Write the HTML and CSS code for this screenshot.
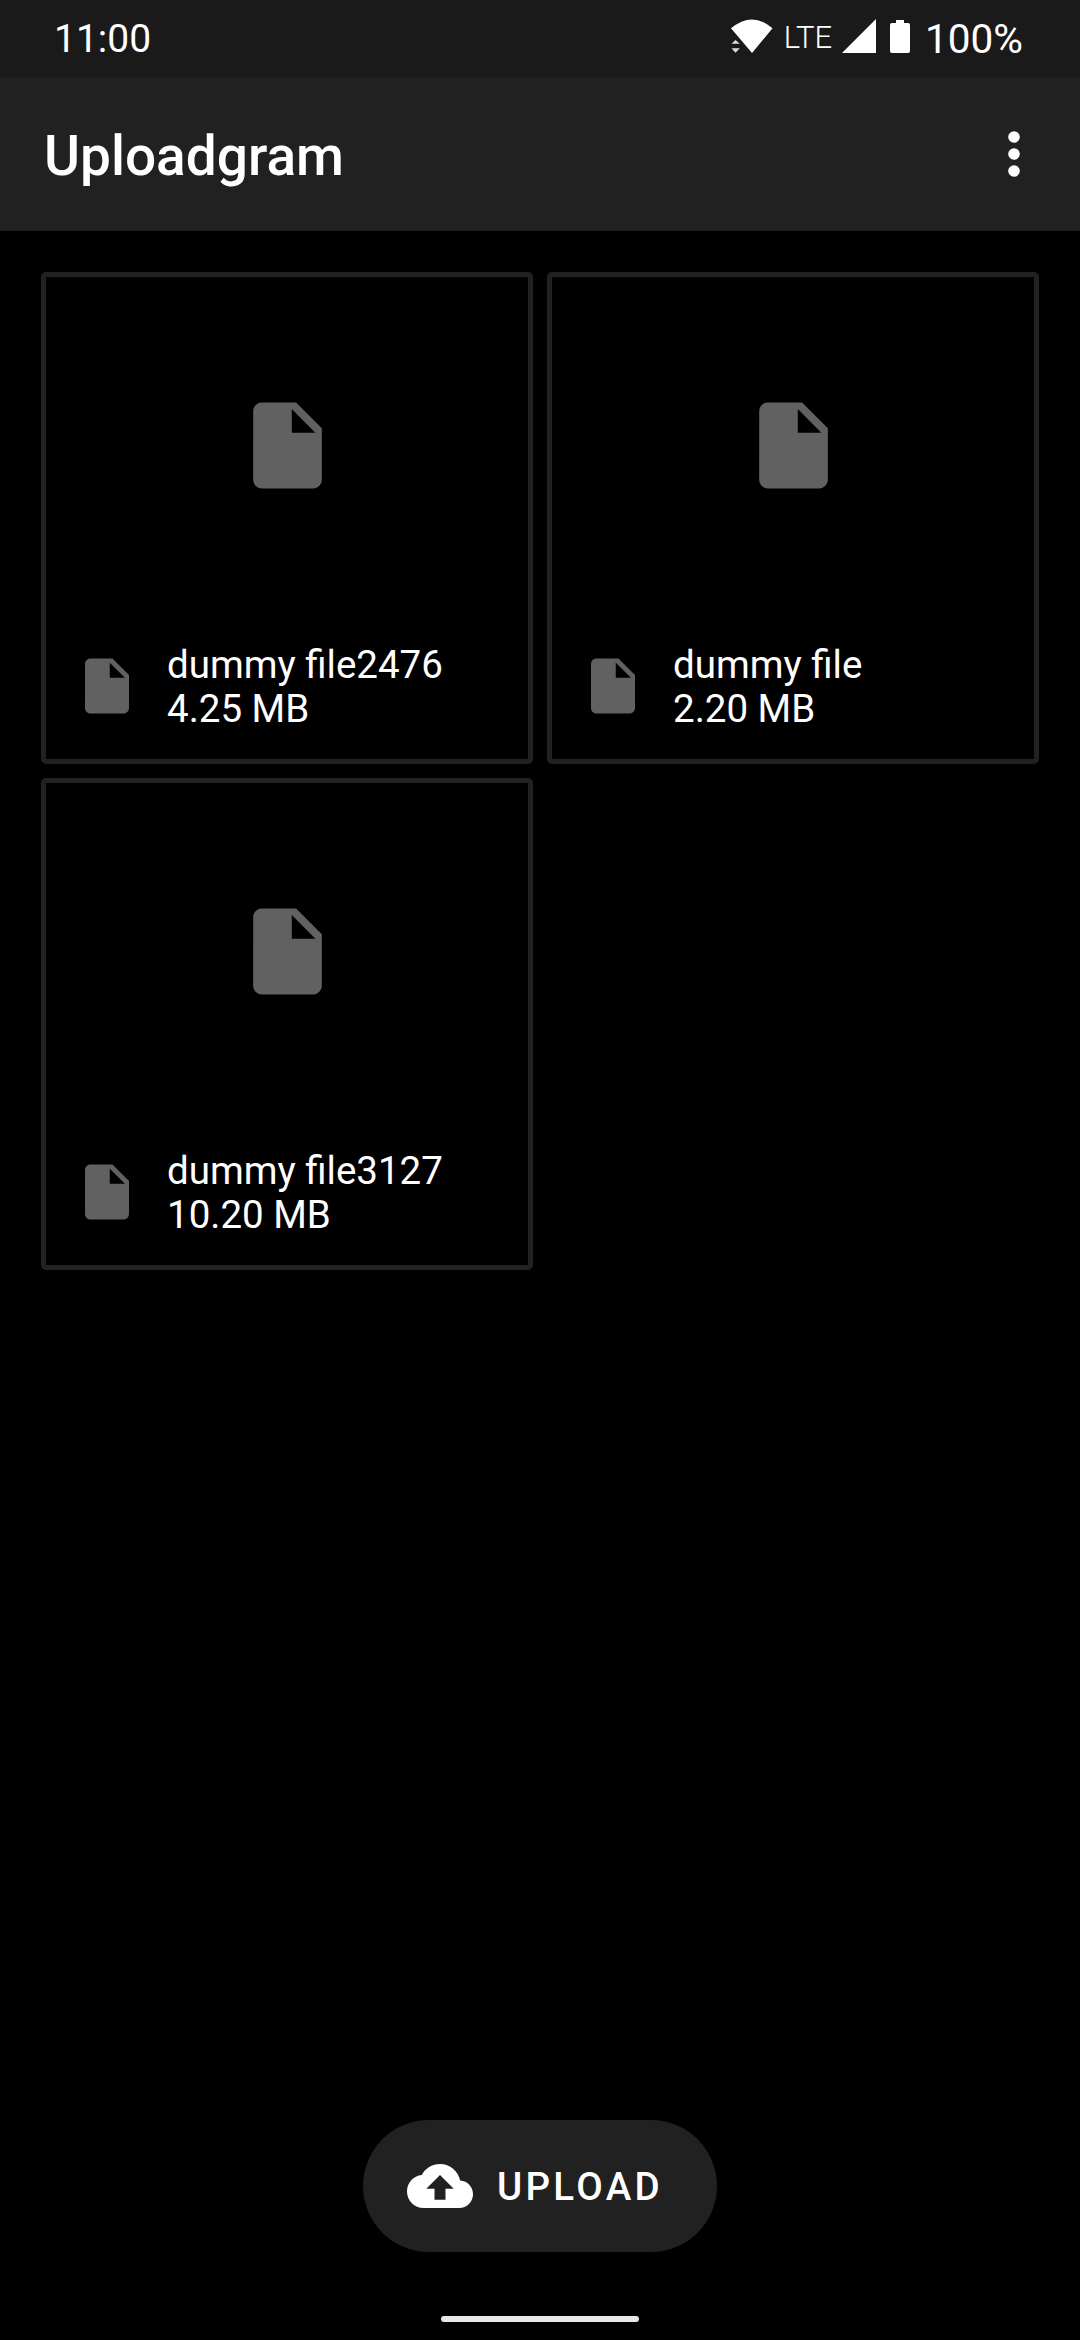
FILE: index.html
```html
<!DOCTYPE html>
<html lang="en">
<head>
    <meta charset="UTF-8">
    <meta name="viewport" content="width=device-width, initial-scale=1.0">
    <title>Uploadgram</title>
    <link rel="stylesheet" href="styles.css">
</head>
<body>

<div class="status-bar">
    <span class="clock">11:00</span>
    <div class="status-icons">
        <svg class="wifi" viewBox="0 0 42 34" width="42" height="34">
            <path d="M21 34 L0 9.3 Q21 -8.5 41.5 9.3 Z" fill="#fff"/>
            <path d="M4.5 21 L8.8 24.7 L0.5 24.7 Z M0.5 29.3 L8.8 29.3 L4.5 33.7 Z" fill="#ddd"/>
        </svg>
        <span class="lte">LTE</span>
        <svg class="signal" viewBox="0 0 34 34" width="34" height="34">
            <path d="M34 0 V34 H0 Z" fill="#fff"/>
        </svg>
        <svg class="battery" viewBox="0 0 20 33" width="20" height="33">
            <path d="M6 0 H14 V3 H18 Q20 3 20 5 V31 Q20 33 18 33 H2 Q0 33 0 31 V5 Q0 3 2 3 H6 Z" fill="#fff"/>
        </svg>
        <span class="battery-level">100%</span>
    </div>
</div>

<header class="app-bar">
    <h1>Uploadgram</h1>
    <svg class="more" viewBox="0 0 12 46" width="12" height="46">
        <circle cx="6" cy="6" r="5.8" fill="#fff"/>
        <circle cx="6" cy="23" r="5.8" fill="#fff"/>
        <circle cx="6" cy="40" r="5.8" fill="#fff"/>
    </svg>
</header>

<main class="file-grid">
    <div class="file-card">
        <svg class="preview-icon" viewBox="0 0 24 24"><path d="M6 2c-1.1 0-1.99.9-1.99 2L4 20c0 1.1.89 2 1.99 2H18c1.1 0 2-.9 2-2V8l-6-6H6zm7 7V3.5L18.5 9H13z"/></svg>
        <div class="file-info">
            <svg class="type-icon" viewBox="0 0 24 24"><path d="M6 2c-1.1 0-1.99.9-1.99 2L4 20c0 1.1.89 2 1.99 2H18c1.1 0 2-.9 2-2V8l-6-6H6zm7 7V3.5L18.5 9H13z"/></svg>
            <div class="file-text">
                <div>dummy file2476</div>
                <div>4.25 MB</div>
            </div>
        </div>
    </div>
    <div class="file-card">
        <svg class="preview-icon" viewBox="0 0 24 24"><path d="M6 2c-1.1 0-1.99.9-1.99 2L4 20c0 1.1.89 2 1.99 2H18c1.1 0 2-.9 2-2V8l-6-6H6zm7 7V3.5L18.5 9H13z"/></svg>
        <div class="file-info">
            <svg class="type-icon" viewBox="0 0 24 24"><path d="M6 2c-1.1 0-1.99.9-1.99 2L4 20c0 1.1.89 2 1.99 2H18c1.1 0 2-.9 2-2V8l-6-6H6zm7 7V3.5L18.5 9H13z"/></svg>
            <div class="file-text">
                <div>dummy file</div>
                <div>2.20 MB</div>
            </div>
        </div>
    </div>
    <div class="file-card">
        <svg class="preview-icon" viewBox="0 0 24 24"><path d="M6 2c-1.1 0-1.99.9-1.99 2L4 20c0 1.1.89 2 1.99 2H18c1.1 0 2-.9 2-2V8l-6-6H6zm7 7V3.5L18.5 9H13z"/></svg>
        <div class="file-info">
            <svg class="type-icon" viewBox="0 0 24 24"><path d="M6 2c-1.1 0-1.99.9-1.99 2L4 20c0 1.1.89 2 1.99 2H18c1.1 0 2-.9 2-2V8l-6-6H6zm7 7V3.5L18.5 9H13z"/></svg>
            <div class="file-text">
                <div>dummy file3127</div>
                <div>10.20 MB</div>
            </div>
        </div>
    </div>
</main>

<div class="upload-row">
    <button class="upload-btn" type="button">
        <svg viewBox="0 0 24 24" width="66" height="66"><path fill="#fff" d="M19.35 10.04C18.67 6.59 15.64 4 12 4 9.11 4 6.6 5.64 5.35 8.04 2.34 8.36 0 10.91 0 14c0 3.31 2.69 6 6 6h13c2.76 0 5-2.24 5-5 0-2.64-2.05-4.78-4.65-4.96zM14 13v4h-4v-4H7l5-5 5 5h-3z"/></svg>
        <span>UPLOAD</span>
    </button>
</div>

<div class="gesture-bar">
    <div class="home-handle"></div>
</div>

</body>
</html>
```

FILE: styles.css
```css
* {
    margin: 0;
    padding: 0;
    box-sizing: border-box;
}

body {
    font-family: Roboto, sans-serif;
    background-color: #000;
    color: #fff;
    display: flex;
    flex-direction: column;
    height: 2340px;
    overflow: hidden;
}

/* Status bar */
.status-bar {
    height: 77px;
    flex-shrink: 0;
    background-color: #1a1a1a;
    display: flex;
    justify-content: space-between;
    align-items: center;
    padding: 0 57px 5px 54px;
}

.clock {
    font-size: 39px;
    margin-top: 5px;
}

.status-icons {
    display: flex;
    align-items: center;
}

.lte {
    font-size: 31px;
    font-weight: 300;
    margin-left: 11px;
    margin-top: 3px;
}

.signal {
    margin-left: 10px;
}

.battery {
    margin-left: 14px;
}

.battery-level {
    font-size: 40.5px;
    margin-left: 15px;
    margin-top: 5px;
}

/* App bar */
.app-bar {
    height: 154px;
    flex-shrink: 0;
    background-color: #212121;
    display: flex;
    justify-content: space-between;
    align-items: center;
    padding: 0 60px 0 44px;
}

.app-bar h1 {
    font-size: 55px;
    font-weight: 500;
    margin-top: 3px;
}

/* File cards */
.file-grid {
    flex: 1;
    display: grid;
    grid-template-columns: repeat(2, 492px);
    grid-auto-rows: 492px;
    align-content: start;
    gap: 14px;
    padding: 41px 0 0 41px;
}

.file-card {
    border: 5.5px solid #212121;
    border-radius: 5px;
    display: flex;
    flex-direction: column;
    align-items: center;
    padding-top: 117px;
}

.preview-icon {
    width: 103px;
    height: 103px;
    fill: #616161;
}

.file-info {
    display: flex;
    align-items: center;
    width: 100%;
    margin-top: auto;
    padding: 0 0 28.5px 27.5px;
}

.type-icon {
    width: 66px;
    height: 66px;
    fill: #616161;
    flex-shrink: 0;
}

.file-text {
    margin-left: 27.5px;
    margin-top: 2px;
    font-size: 38.5px;
    line-height: 44px;
}

/* Upload button */
.upload-row {
    display: flex;
    justify-content: center;
    flex-shrink: 0;
}

.upload-btn {
    width: 354px;
    height: 132px;
    border: none;
    border-radius: 66px;
    background-color: #212121;
    color: #fff;
    font-family: Roboto, sans-serif;
    font-size: 38.5px;
    font-weight: 500;
    letter-spacing: 3.3px;
    display: flex;
    align-items: center;
    gap: 24px;
    padding-left: 44px;
}

/* Gesture handle */
.gesture-bar {
    height: 88px;
    flex-shrink: 0;
    display: flex;
    justify-content: center;
    padding-top: 64px;
}

.home-handle {
    width: 198px;
    height: 6px;
    border-radius: 3px;
    background-color: #e8e8e8;
}
```
